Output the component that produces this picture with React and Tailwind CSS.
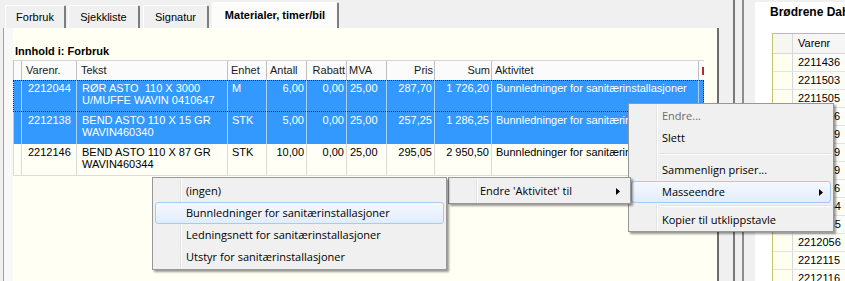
import clsx from "clsx";

const rows = [
  {
    nr: "2212044",
    tekst: ["RØR ASTO  110 X 3000", "U/MUFFE WAVIN 0410647"],
    enhet: "M",
    antall: "6,00",
    rabatt: "0,00",
    mva: "25,00",
    pris: "287,70",
    sum: "1 726,20",
    akt: "Bunnledninger for sanitærinstallasjoner",
    sel: true,
    focus: true,
  },
  {
    nr: "2212138",
    tekst: ["BEND ASTO 110 X 15 GR", "WAVIN460340"],
    enhet: "STK",
    antall: "5,00",
    rabatt: "0,00",
    mva: "25,00",
    pris: "257,25",
    sum: "1 286,25",
    akt: "Bunnledninger for sanitærinstallasjoner",
    sel: true,
  },
  {
    nr: "2212146",
    tekst: ["BEND ASTO 110 X 87 GR", "WAVIN460344"],
    enhet: "STK",
    antall: "10,00",
    rabatt: "0,00",
    mva: "25,00",
    pris: "295,05",
    sum: "2 950,50",
    akt: "Bunnledninger for sanitærinstallasjoner",
  },
];

const varenr = [
  "2211436",
  "2211503",
  "2211505",
  "2211506",
  "2211509",
  "2211519",
  "2211529",
  "2211546",
  "2212054",
  "2212055",
  "2212056",
  "2212115",
  "2212116",
];

const Tab = ({ w, active, children }) => (
  <div
    className={clsx(
      "flex items-center justify-center rounded-t-[2px] border-l border-t border-r-2 border-l-white border-t-white border-r-[#7d7d7d] whitespace-nowrap",
      w,
      active ? "h-[26px] bg-[#fcfcfa] pb-[1px] font-bold" : "h-[23px] bg-[#f0f0f0]"
    )}
  >
    {children}
  </div>
);

const Arrow = () => (
  <svg
    width="4"
    height="7"
    viewBox="0 0 4 7"
    className="absolute right-[7px] top-[7px]"
  >
    <path d="M0 0L4 3.5L0 7Z" fill="#000" />
  </svg>
);

const Item = ({ label, disabled, hot, arrow, pad = "pl-[30px]" }) => (
  <div
    className={clsx(
      "relative mx-[2px] flex h-[22px] items-center whitespace-nowrap rounded-[3px] border",
      hot
        ? "border-[#a8caf0] bg-[linear-gradient(#f4f8fe,#e2edfb)]"
        : "border-transparent",
      disabled ? "text-[#6d6d6d]" : "text-black"
    )}
  >
    <span className={pad}>{label}</span>
    {arrow && <Arrow />}
  </div>
);

const Sep = ({ h }) => (
  <div className={clsx("flex items-center", h)}>
    <div className="ml-[30px] mr-[2px] h-[2px] flex-1 border-t border-b border-t-[#e0e0e0] border-b-white" />
  </div>
);

const menuBox =
  "absolute border border-[#979797] bg-[linear-gradient(90deg,#f0f0f0_27px,#e2e3e3_27px,#e2e3e3_28px,#ffffff_28px,#ffffff_29px,#f0f0f0_29px)] font-['Open_Sans',sans-serif] text-[11px] shadow-[2px_2px_2px_rgba(0,0,0,0.4)]";

const App = () => {
  return (
    <div className="relative flex h-[281px] w-[845px] overflow-hidden bg-[#f0f0f0] font-['Liberation_Sans',Arial,sans-serif] text-[11px] text-black">
      {/* left: tabs + page */}
      <div className="flex w-[719px] flex-col">
        <div className="flex h-[28px] items-end pl-[5px]">
          <Tab w="w-[61px]">Forbruk</Tab>
          <div className="w-[2px]" />
          <Tab w="w-[72px]">Sjekkliste</Tab>
          <div className="w-[3px]" />
          <Tab w="w-[66px]">Signatur</Tab>
          <div className="w-[3px]" />
          <Tab w="w-[127px]" active>
            Materialer, timer/bil
          </Tab>
        </div>

        <div className="flex flex-1 pl-[3px]">
          <div className="w-[10px] border-l border-[#a0a0a0] bg-[#f8f8f8]" />
          <div className="w-[704px] bg-[#fffff4]">
            <div className="h-[32px] pl-[2px] pt-[16px] font-bold leading-[14px]">
              Innhold i: Forbruk
            </div>

            <div className="w-[691px]">
              <div className="flex h-[20px] border-t border-[#d5d5d5] bg-[#fbfbfb] leading-[19px] text-[#1a1a1a]">
                <div className="w-[9px] border-l border-r border-[#c0c0c0]" />
                <div className="w-[55px] border-r border-[#c0c0c0] pl-[4px]">Varenr.</div>
                <div className="w-[151px] border-r border-[#c0c0c0] pl-[4px]">Tekst</div>
                <div className="w-[39px] border-r border-[#c0c0c0] pl-[3px]">Enhet</div>
                <div className="w-[40px] border-r border-[#c0c0c0] pl-[3px]">Antall</div>
                <div className="w-[40px] border-r border-[#c0c0c0] pr-[1px] text-right">Rabatt</div>
                <div className="w-[40px] border-r border-[#c0c0c0] pl-[2px]">MVA</div>
                <div className="w-[48px] border-r border-[#c0c0c0] pr-[1px] text-right">Pris</div>
                <div className="w-[57px] border-r border-[#c0c0c0] pr-[1px] text-right">Sum</div>
                <div className="w-[207px] border-r border-[#c0c0c0] pl-[3px]">Aktivitet</div>
                <div className="flex w-[5px] items-center pl-[3px]">
                  <div className="h-[8px] w-[2px] bg-[#b03030]" />
                </div>
              </div>

              {rows.map((r) => {
                const line = r.sel ? "border-[#a9d1fb]" : "border-[#dcdcd4]";
                return (
                  <div
                    key={r.nr}
                    className={clsx(
                      "flex h-[32px] pt-[2px] leading-[12px]",
                      r.sel
                        ? "bg-[#3399ff] text-white"
                        : "border-b border-[#dcdcd4] bg-[#fffff5]",
                      r.focus &&
                        "outline-1 -outline-offset-1 outline-dotted outline-[#222]"
                    )}
                  >
                    <div className={clsx("-mt-[2px] w-[9px] border-l border-r", line)} />
                    <div className={clsx("-mt-[2px] w-[55px] border-r pl-[6px] pt-[2px]", line)}>
                      {r.nr}
                    </div>
                    <div className={clsx("-mt-[2px] w-[151px] whitespace-pre border-r pl-[5px] pt-[2px]", line)}>
                      {r.tekst[0]}
                      <br />
                      {r.tekst[1]}
                    </div>
                    <div className={clsx("-mt-[2px] w-[39px] border-r pl-[4px] pt-[2px]", line)}>
                      {r.enhet}
                    </div>
                    <div className={clsx("-mt-[2px] w-[40px] border-r pr-[2px] pt-[2px] text-right", line)}>
                      {r.antall}
                    </div>
                    <div className={clsx("-mt-[2px] w-[40px] border-r pr-[2px] pt-[2px] text-right", line)}>
                      {r.rabatt}
                    </div>
                    <div className={clsx("-mt-[2px] w-[40px] border-r pl-[3px] pt-[2px]", line)}>
                      {r.mva}
                    </div>
                    <div className={clsx("-mt-[2px] w-[48px] border-r pr-[2px] pt-[2px] text-right", line)}>
                      {r.pris}
                    </div>
                    <div className={clsx("-mt-[2px] w-[57px] border-r pr-[2px] pt-[2px] text-right", line)}>
                      {r.sum}
                    </div>
                    <div className={clsx("-mt-[2px] w-[207px] whitespace-nowrap border-r pl-[4px] pt-[2px]", line)}>
                      {r.akt}
                    </div>
                    <div className="-mt-[2px] w-[5px]" />
                  </div>
                );
              })}
            </div>
          </div>
          <div className="w-[2px] bg-[#6d6d6d]" />
        </div>
      </div>

      {/* splitter */}
      <div className="flex w-[36px]">
        <div className="w-[14px]" />
        <div className="w-[2px] bg-[#7a7a7a]" />
        <div className="w-[7px]" />
        <div className="w-[2px] bg-[#8c8c8c]" />
        <div className="flex-1" />
      </div>

      {/* right panel */}
      <div className="mt-[2px] w-[90px] bg-white">
        <div className="h-[31px] whitespace-nowrap pl-[15px] pt-[4px] text-[12px] font-bold leading-[13px]">
          Brødrene Dahl AS
        </div>
        <div className="ml-[17px] border-l border-t border-[#c4c46a]">
          <div className="flex h-[20px] border-b border-[#d8d8d8] leading-[19px]">
            <div className="w-[20px] border-r border-[#d8d8d8] bg-[#f7f7f2]" />
            <div className="flex-1 bg-[#f6f6f6] pl-[5px]">Varenr</div>
          </div>
          {varenr.map((v) => (
            <div key={v} className="flex h-[18px] border-b border-[#e3e3e3] leading-[17px]">
              <div className="w-[20px] border-r border-[#d8d8d8] bg-[#fffff0]" />
              <div className="flex-1 bg-[#fdfdf8] pl-[5px]">{v}</div>
            </div>
          ))}
        </div>
      </div>

      {/* context menu */}
      <div className={clsx(menuBox, "left-[628px] top-[103px] w-[206px] pt-[1px]")}>
        <Item label="Endre..." disabled />
        <Item label="Slett" />
        <Sep h="h-[10px]" />
        <Item label="Sammenlign priser..." />
        <Item label="Masseendre" hot arrow />
        <Sep h="h-[6px]" />
        <Item label="Kopier til utklippstavle" />
      </div>

      {/* submenu: Masseendre */}
      <div className={clsx(menuBox, "left-[448px] top-[177px] w-[183px] pb-[1px] pt-[2px]")}>
        <Item label="Endre 'Aktivitet' til" arrow pad="pl-[28px]" />
      </div>

      {/* submenu: aktiviteter */}
      <div className={clsx(menuBox, "left-[152px] top-[177px] w-[295px] pb-[1px] pt-[2px]")}>
        <Item label="(ingen)" />
        <Item label="Bunnledninger for sanitærinstallasjoner" hot />
        <Item label="Ledningsnett for sanitærinstallasjoner" />
        <Item label="Utstyr for sanitærinstallasjoner" />
      </div>
    </div>
  );
};

export default App;
